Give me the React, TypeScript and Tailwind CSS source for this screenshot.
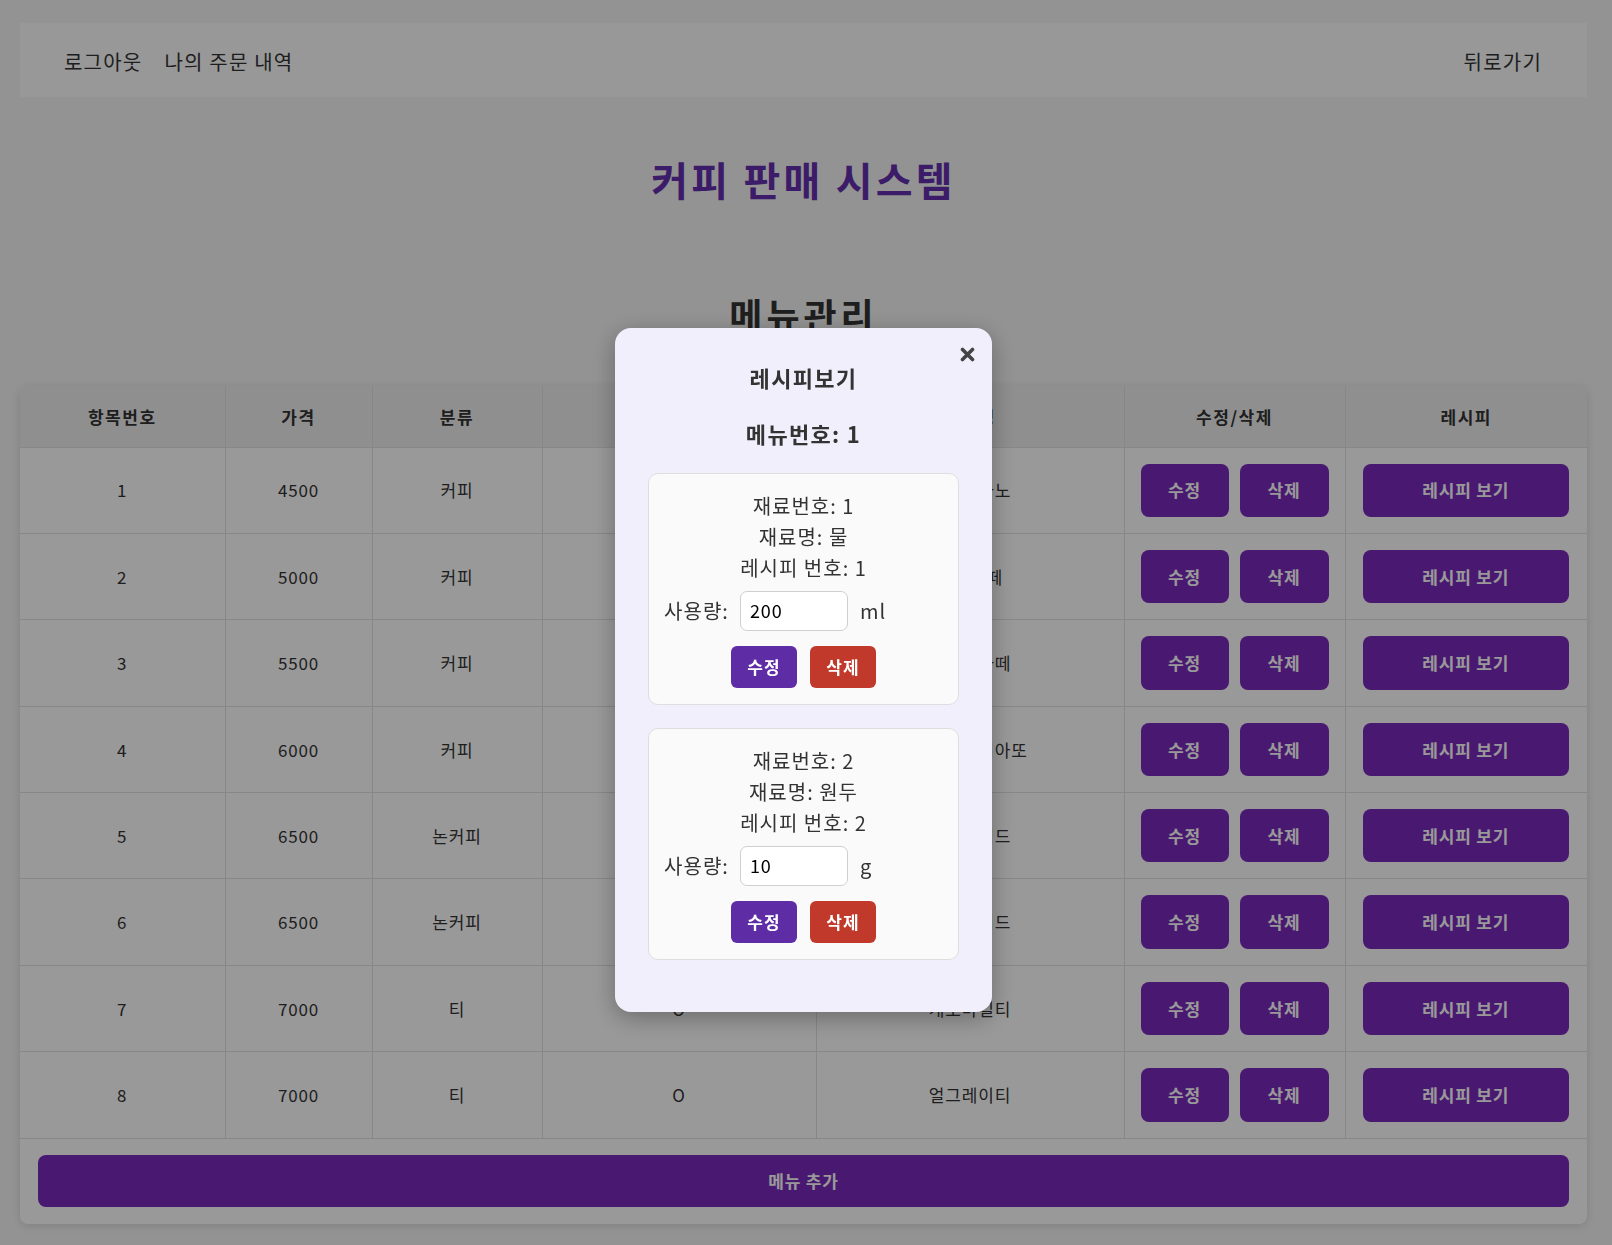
import React from 'react';

interface MenuItem {
  id: number;
  price: number;
  category: string;
  available: string;
  name: string;
}

interface Ingredient {
  no: number;
  name: string;
  recipeNo: number;
  amount: string;
  unit: string;
}

const menus: MenuItem[] = [
  { id: 1, price: 4500, category: '커피', available: 'O', name: '아메리카노' },
  { id: 2, price: 5000, category: '커피', available: 'O', name: '카페라떼' },
  { id: 3, price: 5500, category: '커피', available: 'O', name: '바닐라라떼' },
  { id: 4, price: 6000, category: '커피', available: 'O', name: '카라멜마키아또' },
  { id: 5, price: 6500, category: '논커피', available: 'O', name: '레몬에이드' },
  { id: 6, price: 6500, category: '논커피', available: 'O', name: '자몽에이드' },
  { id: 7, price: 7000, category: '티', available: 'O', name: '캐모마일티' },
  { id: 8, price: 7000, category: '티', available: 'O', name: '얼그레이티' },
];

const ingredients: Ingredient[] = [
  { no: 1, name: '물', recipeNo: 1, amount: '200', unit: 'ml' },
  { no: 2, name: '원두', recipeNo: 2, amount: '10', unit: 'g' },
];

const headers = ['항목번호', '가격', '분류', '판매여부', '메뉴명', '수정/삭제', '레시피'];
const colWidths = [205, 147, 170, 274, 308, 221, 242];

const IngredientCard: React.FC<{ item: Ingredient }> = ({ item }) => {
  return (
    <div className="bg-[#fafafa] border border-[#dedede] rounded-[10px] pt-[16px] pb-[16px] text-center text-[20px] tracking-[0.05em] text-[#333]">
      <div className="leading-[31px]">
        <p>재료번호: {item.no}</p>
        <p>재료명: {item.name}</p>
        <p>레시피 번호: {item.recipeNo}</p>
      </div>
      <div className="mt-[8px] flex items-center justify-center">
        <span>사용량:</span>
        <input
          defaultValue={item.amount}
          className="ml-[11px] w-[108px] h-[40px] rounded-[7px] border border-[#cfcfcf] bg-white pl-[9px] pb-[3px] text-[18px] text-black outline-none"
        />
        <span className="ml-[12px] w-[83px] text-left">{item.unit}</span>
      </div>
      <div className="mt-[15px] flex justify-center gap-[13px]">
        <button className="w-[66px] h-[42px] rounded-[6px] bg-[#5e2ca5] text-white text-[17px] font-bold">수정</button>
        <button className="w-[66px] h-[42px] rounded-[6px] bg-[#c0392b] text-white text-[17px] font-bold">삭제</button>
      </div>
    </div>
  );
};

const RecipeModal: React.FC = () => {
  return (
    <div className="fixed inset-0 bg-black/40 flex justify-center items-start pt-[328px] pr-[5px]">
      <div className="relative w-[377px] bg-[#f2effd] rounded-[16px] px-[33px] pt-[34px] pb-[52px] shadow-[0_6px_24px_rgba(0,0,0,0.3)]">
        <button className="absolute top-[19px] right-[17px] w-[15px] h-[15px]">
          <svg viewBox="0 0 15 15" className="w-[15px] h-[15px]">
            <path d="M2.5 2.5 L12.5 12.5 M12.5 2.5 L2.5 12.5" stroke="#444" strokeWidth={3.6} strokeLinecap="round" />
          </svg>
        </button>
        <h2 className="text-center text-[22px] font-bold leading-[30px] tracking-[0.06em] text-[#333]">레시피보기</h2>
        <h3 className="mt-[26px] text-center text-[22px] font-bold leading-[30px] tracking-[0.06em] text-[#333]">메뉴번호: 1</h3>
        <div className="mt-[25px] flex flex-col gap-[23px]">
          {ingredients.map((item) => (
            <IngredientCard key={item.no} item={item} />
          ))}
        </div>
      </div>
    </div>
  );
};

export default function App() {
  return (
    <div className="min-h-screen bg-[#f5f5f5] px-[20px] pt-[23px] pb-[30px] font-['Noto_Sans_CJK_KR','Noto_Sans',sans-serif] text-[#333]">
      {/* Top nav */}
      <nav className="h-[74px] bg-[#fdfdfd] flex items-center justify-between pl-[44px] pr-[45px] pt-[3px] w-[1567px]">
        <div className="flex items-center gap-[22px] text-[20px] tracking-[0.06em]">
          <a>로그아웃</a>
          <a>나의 주문 내역</a>
        </div>
        <a className="text-[20px] tracking-[0.06em]">뒤로가기</a>
      </nav>

      <h1 className="mt-[58px] w-[1567px] text-center text-[40px] font-bold leading-[48px] tracking-[0.08em] text-[#6530b0]">커피 판매 시스템</h1>
      <h2 className="mt-[89px] w-[1567px] text-center text-[36px] font-bold leading-[44px] tracking-[0.11em] text-[#333]">메뉴관리</h2>

      {/* Menu table */}
      <div className="mt-[50px] w-[1567px] bg-white rounded-[8px] shadow-[0_2px_10px_rgba(0,0,0,0.12)] overflow-hidden">
        <table className="w-full table-fixed border-collapse text-[17px] tracking-[0.05em]">
          <colgroup>
            {colWidths.map((w, i) => (
              <col key={i} style={{ width: w }} />
            ))}
          </colgroup>
          <thead>
            <tr className="bg-[#eeeeee] h-[61px]">
              {headers.map((h, i) => (
                <th key={h} className={`font-bold tracking-[0.09em] text-[#333] border-[#e2e2e2] ${i > 0 ? 'border-l' : ''}`}>
                  {h}
                </th>
              ))}
            </tr>
          </thead>
          <tbody>
            {menus.map((m) => (
              <tr key={m.id} className="border-t border-[#e2e2e2]">
                <td className="text-center py-[16px]">{m.id}</td>
                <td className="text-center border-l border-[#e2e2e2]">{m.price}</td>
                <td className="text-center border-l border-[#e2e2e2]">{m.category}</td>
                <td className="text-center border-l border-[#e2e2e2]">{m.available}</td>
                <td className="text-center border-l border-[#e2e2e2]">{m.name}</td>
                <td className="border-l border-[#e2e2e2] px-[16px] py-[16px]">
                  <div className="flex justify-center gap-[11px]">
                    <button className="w-[88px] h-[53.4px] rounded-[8px] bg-[#7b2bbd] text-white font-bold">수정</button>
                    <button className="w-[89px] h-[53.4px] rounded-[8px] bg-[#7b2bbd] text-white font-bold">삭제</button>
                  </div>
                </td>
                <td className="border-l border-[#e2e2e2] pl-[17px] pr-[18px] py-[16px]">
                  <button className="w-full h-[53.4px] rounded-[8px] bg-[#7b2bbd] text-white font-bold">레시피 보기</button>
                </td>
              </tr>
            ))}
          </tbody>
        </table>
        <div className="border-t border-[#e2e2e2] px-[18px] pt-[16px] pb-[17px]">
          <button className="w-full h-[52px] rounded-[8px] bg-[#7b2bbd] text-white text-[17px] font-bold tracking-[0.05em]">메뉴 추가</button>
        </div>
      </div>

      <RecipeModal />
    </div>
  );
}
